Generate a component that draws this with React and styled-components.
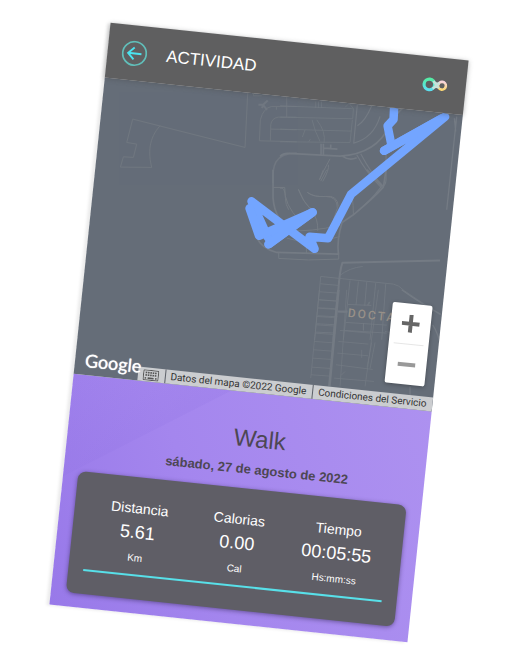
import React from "react";
import styled, { createGlobalStyle } from "styled-components";

const Global = createGlobalStyle`
  * { box-sizing: border-box; }
  body {
    margin: 0;
    background: #fff;
    font-family: "Liberation Sans", Arial, sans-serif;
  }
`;

const Page = styled.main`
  min-height: 100vh;
  display: grid;
  grid-template-columns: minmax(0, 360px);
  place-content: center;
  padding-top: 1px;
  overflow: hidden;
`;

const Phone = styled.article`
  display: flex;
  flex-direction: column;
  transform: rotate(6deg);
  box-shadow: -3px 1px 3px rgba(0, 0, 0, 0.08);
`;

const Header = styled.header`
  position: relative;
  display: flex;
  align-items: center;
  gap: 19px;
  height: 55px;
  padding: 0 18px 0 14px;
  background: #5f5f60;
  box-shadow: 0 1px 5px rgba(70, 72, 76, 0.4);
  z-index: 1;
`;

const BackButton = styled.button`
  display: grid;
  padding: 0;
  border: 0;
  background: none;
  cursor: pointer;
`;

const Title = styled.h1`
  flex: 1;
  margin: 0;
  font-size: 17px;
  line-height: 20px;
  font-weight: 400;
  color: #fff;
`;

const MapPanel = styled.section`
  position: relative;
  display: grid;
  height: 298px;
  background: #656d78;
  overflow: hidden;
`;

const MapDrawing = styled.svg`
  width: 100%;
  height: 298px;
`;

const ZoomControl = styled.div`
  position: absolute;
  right: 10px;
  bottom: 24px;
  display: flex;
  flex-direction: column;
  align-items: center;
  width: 40px;
  border-radius: 2px;
  background: #fff;
  box-shadow: 0 1px 4px rgba(0, 0, 0, 0.3);
`;

const ZoomButton = styled.button`
  display: grid;
  place-items: center;
  width: 40px;
  height: 40px;
  padding: 0;
  border: 0;
  background: none;
  color: ${(p) => (p.$muted ? "#999" : "#666")};
`;

const ZoomDivider = styled.span`
  width: 30px;
  height: 1px;
  background: #e6e6e6;
`;

const Brand = styled.a`
  position: absolute;
  left: 10px;
  bottom: 3px;
  font-family: Lato, sans-serif;
  font-size: 18px;
  line-height: 24px;
  font-weight: 400;
  text-shadow: 0 0 1px #fff;
  color: #fff;
  text-decoration: none;
`;

const Attribution = styled.div`
  position: absolute;
  right: 0;
  bottom: 0;
  display: flex;
  height: 14px;
  background: #cbcdd0;
  font-family: Roboto, sans-serif;
  font-size: 10px;
  line-height: 14px;
  color: #333;
  white-space: nowrap;
`;

const Credit = styled.span`
  display: flex;
  align-items: center;
  padding: 0 6px 0 5px;
  border-left: ${(p) => (p.$first ? "0" : "1px solid #5c6068")};
`;

const KeyboardButton = styled.button`
  display: grid;
  padding: 0;
  border: 0;
  background: none;
  color: #555;
`;

const TermsLink = styled.a`
  color: inherit;
  text-decoration: none;
`;

const Summary = styled.section`
  padding: 32px 15px 14px;
  background:
    linear-gradient(147deg, rgba(151, 120, 232, 0) 0, rgba(146, 116, 228, 0.22) 86px, transparent 87px),
    linear-gradient(66deg, #9879e9 0%, #a486ee 40%, #ad91f0 100%);
`;

const Heading = styled.header`
  padding-left: 24px;
  text-align: center;
  color: #4d4754;
`;

const ActivityName = styled.h2`
  margin: 0;
  font-size: 24px;
  line-height: 28px;
  font-weight: 400;
`;

const ActivityDate = styled.p`
  margin: 9px 0 11px;
  font-size: 13px;
  line-height: 16px;
  font-weight: 700;
`;

const Card = styled.div`
  padding: 23px 15px;
  border-radius: 8px;
  background: #5f5e66;
  box-shadow: 0 1px 4px rgba(40, 30, 70, 0.5);
  color: #fff;
`;

const Stats = styled.dl`
  display: grid;
  grid-template-columns: repeat(3, 1fr);
  margin: 0;
  padding-bottom: 10px;
  border-bottom: 2px solid #58e0e9;
  text-align: center;
`;

const Stat = styled.div`
  display: flex;
  flex-direction: column;
`;

const Label = styled.dt`
  font-size: 14px;
  line-height: 16px;
`;

const Value = styled.dd`
  margin: 6px 0 10px;
  font-size: 18px;
  line-height: 20px;
`;

const Unit = styled.dd`
  margin: 0;
  font-size: 10px;
  line-height: 12px;
`;

const stats = [
  { label: "Distancia", value: "5.61", unit: "Km" },
  { label: "Calorias", value: "0.00", unit: "Cal" },
  { label: "Tiempo", value: "00:05:55", unit: "Hs:mm:ss" },
];

function BackIcon() {
  return (
    <svg width="26" height="26" viewBox="0 0 26 26" fill="none" aria-hidden="true">
      <circle cx="13" cy="13" r="11.8" stroke="#61beb9" strokeWidth="1.7" />
      <path d="M20 13H6.8M12.6 7L6.6 13l6 6" stroke="#4be3ef" strokeWidth="1.9" />
    </svg>
  );
}

function InfinityLogo() {
  return (
    <svg width="26" height="16" viewBox="0 0 26 16" fill="none" role="img" aria-label="Logo">
      <defs>
        <linearGradient id="loopA" x1="0" y1="0" x2="0" y2="1">
          <stop offset="0" stopColor="#55eca6" />
          <stop offset="1" stopColor="#5ce0ef" />
        </linearGradient>
        <linearGradient id="loopB" x1="0" y1="0" x2="0" y2="1">
          <stop offset="0" stopColor="#f7d5dc" />
          <stop offset="1" stopColor="#fbd774" />
        </linearGradient>
      </defs>
      <circle cx="7.5" cy="8" r="5.3" stroke="url(#loopA)" strokeWidth="3.2" />
      <circle cx="20.2" cy="8" r="3.9" stroke="url(#loopB)" strokeWidth="2.6" />
      <path d="M11.2 4.2Q14 8 17.5 5.6M11.2 11.8Q14 8 17.5 10.4M12.5 8h4" stroke="#c6e3da" strokeWidth="2.4" />
    </svg>
  );
}

function KeyboardIcon() {
  return (
    <svg width="16" height="11" viewBox="0 0 16 11" aria-hidden="true">
      <rect x="0.5" y="0.5" width="15" height="10" rx="1" fill="none" stroke="currentColor" />
      <path
        d="M2.5 3h11M2.5 5.5h11"
        stroke="currentColor"
        strokeWidth="1.6"
        strokeDasharray="1.6 0.75"
      />
      <path d="M2 8.5h1.5M5 8.5h6M12.5 8.5h1.5" stroke="currentColor" strokeWidth="1.6" />
    </svg>
  );
}

function RouteMap() {
  return (
    <MapDrawing viewBox="0 0 360 298" preserveAspectRatio="xMaxYMin slice" role="img" aria-label="Recorrido">
      <g transform="translate(0 -55) rotate(-6) translate(-110.5 -23)" fill="none">
        <g stroke="#747b84" strokeLinejoin="round">
          <g transform="translate(90 10) scale(0.3333)" strokeWidth="3" opacity="0.75">
            <path d="M128 328L110 398 140 403 130 443 100 441 91 472 185 473C174 430 176 385 210 348M128 328L465 413 473 250" />
            <path d="M505 285l14 0 12 15M533 272l-14 13-3 10" strokeWidth="6" />
            <path d="M620 290H545Q520 294 511 330L508 393 620 396M620 322H565Q545 325 542 345L541 393M542 358L620 360M559 290v10M490 250v8h25M548 252l25 5" />
            <path d="M549 520C546 470 552 430 620 430" strokeWidth="5" />
          </g>
          <g transform="translate(280 40) scale(0.3333)" strokeWidth="3">
            <path d="M0 198L220 207 218 237 0 232M0 268L215 274M20 170V232M107 185V205M115 185V205M124 185V205M195 203l12-12 14 16M96 240q8 35 24 65M110 240q28 35 22 70M0 306L210 308 217 240M75 270l-8 22M91 298l-5 8" opacity="0.75" />
            <path d="M0 350Q10 340 25 341L180 349Q290 342 330 255 345 225 368 205M123 312V345M130 312V345M132 325l40 3M152 314v14M188 350q20 14 42 4" strokeWidth="5" />
            <path d="M232 192L221 310Q280 295 300 230M232 258Q255 245 275 198M230 345Q260 400 303 443M242 342Q275 405 310 440M318 345V420Q317 440 302 443 270 485 235 512" strokeWidth="3.5" />
            <path d="M150 357q-22 40-31 62M145 375q3 15-17 50M0 445q15-5 16 30 0 20 10 35M55 450q20 50 45 60M82 458q20 15 55 12 35-5 38 30" />
            <path d="M530 230L500 510M523 235q2 20 4 40" strokeWidth="4" />
          </g>
          <g transform="translate(220 170) scale(0.3333)" strokeWidth="3">
            <path d="M159 0V85Q164 150 215 185M108 200Q125 238 170 248L355 253Q350 210 366 158L400 135Q460 85 490 52L498 0" strokeWidth="5" />
            <path d="M160 53h34q-3 50 45 100M235 58q12 35 40 65 20 25 18 60M262 68q20 15 55 12 35 0 35 35L340 150M176 249v17q90 8 180 2v-20M215 182q50 5 145-15M200 205q70 25 160-5M320 0L302 34M310 0l-12 30M400 135q0-30-3-50M259 210v42" />
            <path d="M660 272L367 279Q359 300 355 360L340 510M440 0L487 50" strokeWidth="6" />
            <path d="M358 318q30-24 70-28M302 320L520 343Q535 345 553 363L660 435M302 320L284 510M301 342l56 5M299 366l56 4M297 390l56 4M294 414l58 3M292 438l60 3M290 462l58 3M287 487l60 3M354 426l28 3M390 332L370 510M415 335L408 405M440 337L434 408M467 340L450 510M497 343L485 510M384 404L454 407M378 458L500 466M375 482L500 490M447 397l-5 10M430 460v22" opacity="0.8" />
            <path d="M353 425h30" strokeWidth="6" />
          </g>
          <g transform="translate(250 290) scale(0.3333)" strokeWidth="3">
            <path d="M265 0L238 290" strokeWidth="8" />
            <path d="M208 0L182 265M205 30l56 4M203 55l56 4M200 80l56 4M198 105l56 4M195 130l56 4M193 155l56 4M190 180l56 4M188 205l56 4M185 232l56 4M183 255l56 4M290 0L270 290M270 122l90 8M265 155l90 8M262 190l92 8M258 225l110 14M252 265l120 10M385 0L345 290M405 125l15 3M340 100v22M335 180v24M375 158l-15 78M365 158l-14 75M285 245l-12 12M360 35l-5 12" opacity="0.7" />
            <path d="M455 0Q510 40 575 75M548 105Q565 130 575 180M480 290v30" strokeWidth="4" />
          </g>
        </g>
        <text
          transform="translate(347.5 317) rotate(6)"
          fill="#979088"
          fontFamily="Roboto, sans-serif"
          fontSize="12"
          fontWeight="500"
          letterSpacing="2"
        >
          DOCTA
        </text>
        <g stroke="#73a5ff" strokeWidth="8.5" strokeLinecap="round" strokeLinejoin="round">
          <path d="M394.5 98L393.5 119.5 387.5 126 391.5 146" />
          <path d="M384 151L445 117 351 194.5 328 238.5 309.5 237 314.5 249 251.5 201.5 268 238 312.5 212.5 268.5 244.5" />
          <path d="M268.5 244.5L312.5 212.5 259 236 249.5 208.5" />
          <path d="M384 151L442 118.5" />
        </g>
      </g>
    </MapDrawing>
  );
}

export default function App() {
  return (
    <>
      <Global />
      <Page>
        <Phone>
          <Header>
            <BackButton type="button" aria-label="Volver">
              <BackIcon />
            </BackButton>
            <Title>ACTIVIDAD</Title>
            <InfinityLogo />
          </Header>
          <MapPanel>
            <RouteMap />
            <ZoomControl>
              <ZoomButton type="button" aria-label="Acercar">
                <svg width="18" height="18" viewBox="0 0 18 18" stroke="currentColor" strokeWidth="4" aria-hidden="true">
                  <path d="M0 9h18M9 0v18" />
                </svg>
              </ZoomButton>
              <ZoomDivider />
              <ZoomButton type="button" aria-label="Alejar" $muted>
                <svg width="18" height="18" viewBox="0 0 18 18" stroke="currentColor" strokeWidth="4" aria-hidden="true">
                  <path d="M0 9h18" />
                </svg>
              </ZoomButton>
            </ZoomControl>
            <Attribution>
              <Credit $first>
                <KeyboardButton type="button" aria-label="Combinaciones de teclas">
                  <KeyboardIcon />
                </KeyboardButton>
              </Credit>
              <Credit>Datos del mapa ©2022 Google</Credit>
              <Credit>
                <TermsLink href="#condiciones">Condiciones del Servicio</TermsLink>
              </Credit>
            </Attribution>
            <Brand href="#mapa">Google</Brand>
          </MapPanel>
          <Summary>
            <Heading>
              <ActivityName>Walk</ActivityName>
              <ActivityDate>sábado, 27 de agosto de 2022</ActivityDate>
            </Heading>
            <Card>
              <Stats>
                {stats.map((s) => (
                  <Stat key={s.label}>
                    <Label>{s.label}</Label>
                    <Value>{s.value}</Value>
                    <Unit>{s.unit}</Unit>
                  </Stat>
                ))}
              </Stats>
            </Card>
          </Summary>
        </Phone>
      </Page>
    </>
  );
}
